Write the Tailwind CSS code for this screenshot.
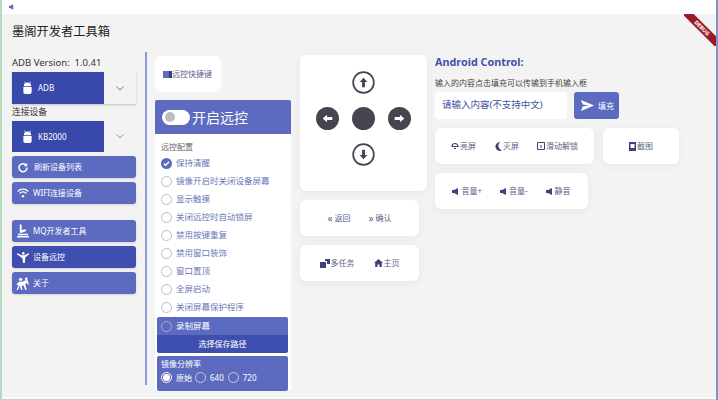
<!DOCTYPE html>
<html lang="zh-CN">
<head>
    <meta charset="UTF-8">
    <title>墨阁开发者工具箱</title>
    <script src="https://cdn.jsdelivr.net/npm/@tailwindcss/browser@4"></script>
</head>
<body class="w-[718px] h-[400px] overflow-hidden relative bg-[#f3f3f3] font-['Noto_Sans','Noto_Sans_CJK_SC',sans-serif] text-[#333]">
    <!-- window edges -->
    <div class="absolute left-0 top-0 bottom-0 w-[2px] bg-[#b5dcc0]"></div>
    <div class="absolute right-0 top-0 bottom-0 w-[2px] bg-[#7f93cf]"></div>
    <div class="absolute left-[2px] right-[2px] bottom-0 h-[3px] bg-[#fafafa] border-b border-[#cfcfcf]"></div>

    <!-- title bar -->
    <div class="h-[14px] bg-white flex items-center pl-[9px]">
        <svg class="w-[6px] h-[6px] text-[#5c6bc0]" viewBox="0 0 10 10" fill="currentColor"><path d="M0 3h3l4-3v10L3 7H0z"/></svg>
    </div>

    <!-- debug ribbon -->
    <div class="absolute top-[14px] right-[2px] w-[32px] h-[32px] overflow-hidden">
        <div class="absolute left-[-12px] top-[10px] w-[60px] h-[8px] bg-[#9b1c28] rotate-45 text-white text-[5.500px] leading-[8px] font-bold text-center">DEBUG</div>
    </div>

    <h1 class="pl-[12px] pt-[9px] h-[38px] text-[12.250px] leading-[18px] font-normal text-[#222]">墨阁开发者工具箱</h1>

    <div class="flex items-start pl-[12px]">
        <!-- left column -->
        <div class="w-[124px] shrink-0 pt-[1px]">
            <p class="text-[9.500px] leading-[19px] h-[19px] text-[#333]">ADB Version:&nbsp; 1.0.41</p>
            <div class="flex h-[32px] shadow-[0_1px_2px_rgba(0,0,0,0.2)] bg-[#f3f3f3]">
                <div class="w-[92px] bg-[#3949ab] flex items-center pl-[10px] gap-[5px] text-white text-[8px]">
                    <svg class="w-[11px] h-[14px]" viewBox="0 0 12 14" fill="currentColor"><path d="M2 5a4 4 0 0 1 8 0zM1.500 6h9v5.500a2 2 0 0 1-2 2h-5a2 2 0 0 1-2-2zM3 0l1 1.500-.6.3-1-1.500zM9 0l-1 1.500.6.3 1-1.500z"/></svg>
                    ADB
                </div>
                <div class="flex-1 flex items-center justify-center">
                    <svg class="w-[8px] h-[5px] text-[#777]" viewBox="0 0 8 5" fill="none" stroke="currentColor" stroke-width="1"><path d="M.5.500 4 4 7.500.5"/></svg>
                </div>
            </div>
            <p class="text-[8.750px] leading-[17px] h-[17px] text-[#333]">连接设备</p>
            <div class="flex h-[31px] bg-[#f3f3f3]">
                <div class="w-[92px] bg-[#3949ab] flex items-center pl-[10px] gap-[5px] text-white text-[8px]">
                    <svg class="w-[11px] h-[14px]" viewBox="0 0 12 14" fill="currentColor"><path d="M2 5a4 4 0 0 1 8 0zM1.500 6h9v5.500a2 2 0 0 1-2 2h-5a2 2 0 0 1-2-2zM3 0l1 1.500-.6.3-1-1.500zM9 0l-1 1.500.6.3 1-1.500z"/></svg>
                    KB2000
                </div>
                <div class="flex-1 flex items-center justify-center">
                    <svg class="w-[8px] h-[5px] text-[#999]" viewBox="0 0 8 5" fill="none" stroke="currentColor" stroke-width="1"><path d="M.5.500 4 4 7.500.5"/></svg>
                </div>
            </div>

            <div class="mt-[4px] flex flex-col gap-[4px]">
                <div class="h-[22px] rounded-[3px] bg-[#5c6bc0] flex items-center pl-[6px] gap-[6px] text-white text-[8px] shadow-sm">
                    <svg class="w-[10px] h-[11px]" viewBox="0 0 12 12" fill="none" stroke="currentColor" stroke-width="1.800"><path d="M10 3.500A4.800 4.800 0 1 0 10.800 6"/><path d="M11 .5v4H7" fill="currentColor" stroke="none"/></svg>
                    刷新设备列表
                </div>
                <div class="h-[22px] rounded-[3px] bg-[#5c6bc0] flex items-center pl-[5px] gap-[4px] text-white text-[8px] shadow-sm">
                    <svg class="w-[12px] h-[10px]" viewBox="0 0 13 11" fill="none" stroke="currentColor" stroke-width="1.400"><path d="M.7 3.800a8 8 0 0 1 11.600 0M2.800 6a5 5 0 0 1 7.400 0"/><circle cx="6.500" cy="9" r="1.300" fill="currentColor" stroke="none"/></svg>
                    WIFI连接设备
                </div>
            </div>

            <div class="mt-[16px] flex flex-col gap-[4px]">
                <div class="h-[22px] rounded-[3px] bg-[#5c6bc0] flex items-center pl-[5px] gap-[4px] text-white text-[8px] shadow-sm">
                    <svg class="w-[12px] h-[14px]" viewBox="0 0 13 14" fill="currentColor"><path d="M3 0h2v6l4-1 1 2-5 2H3zM1 10h11v1.500H1zM0 12.500h13V14H0z"/></svg>
                    MQ开发者工具
                </div>
                <div class="h-[22px] rounded-[3px] bg-[#3f4fb0] flex items-center pl-[5px] gap-[4px] text-white text-[8px] shadow-sm">
                    <svg class="w-[12px] h-[11px]" viewBox="0 0 13 12" fill="currentColor"><path d="M0 1l5 2.500h3L13 1v1.500L9 6 8.500 12H6.500L6 7 4 5.500 0 2.500z"/><circle cx="6.800" cy="1.500" r="1.400"/></svg>
                    设备远控
                </div>
                <div class="h-[22px] rounded-[3px] bg-[#5c6bc0] flex items-center pl-[4px] gap-[4px] text-white text-[8px] shadow-sm">
                    <svg class="w-[13px] h-[13px]" viewBox="0 0 14 14" fill="currentColor"><circle cx="5" cy="2.500" r="1.800"/><circle cx="11" cy="2" r="1.500"/><path d="M3 5h4l3-1.500h2.500L14 8h-1.500l-1-2L10 8l1.500 6H10L8 9l-2 1 1 4H5.500L4 9.500 2 14H.5L3 8 1.500 9 .5 8z"/></svg>
                    关于
                </div>
            </div>
        </div>

        <!-- divider -->
        <div class="ml-[9px] mr-[8px] w-[2px] h-[333px] bg-[#8c98d8] shrink-0"></div>

        <!-- remote config column -->
        <div class="w-[136px] shrink-0 pt-[4px]">
            <div class="w-[66px] h-[36px] bg-white rounded-[6px] flex items-center pl-[8px] text-[8px] text-[#5c5f8a]">
                <span class="w-[9px] h-[7px] bg-[#5c6bc0] border-r-[3px] border-[#3a3f70] shrink-0"></span>远控快捷键
            </div>
            <div class="mt-[8px] h-[34px] bg-[#5c6bc0] rounded-t-[2px] flex items-center pl-[7px] gap-[2px] text-white text-[14px]">
                <span class="w-[28px] h-[15px] rounded-full bg-white flex items-center pl-[3px]">
                    <span class="w-[10px] h-[10px] rounded-full bg-[#bdbdbd]"></span>
                </span>
                开启远控
            </div>
            <div class="bg-white h-[256px] pt-[6px] text-[8.500px] text-[#6a76b8]">
                <p class="pl-[6px] h-[14px] leading-[14px] text-[8px] text-[#666]">远控配置</p>
                <div class="pl-[6px] flex flex-col">
                    <label class="h-[18px] flex items-center gap-[4px]"><span class="w-[11px] h-[11px] rounded-full bg-[#5c6bc0] flex items-center justify-center"><svg class="w-[7px] h-[7px]" viewBox="0 0 8 8" fill="none" stroke="white" stroke-width="1.500"><path d="M1 4l2 2 4-4"/></svg></span>保持清醒</label>
                    <label class="h-[18px] flex items-center gap-[4px]"><span class="w-[11px] h-[11px] rounded-full border border-[#bbb]"></span>镜像开启时关闭设备屏幕</label>
                    <label class="h-[18px] flex items-center gap-[4px]"><span class="w-[11px] h-[11px] rounded-full border border-[#bbb]"></span>显示触摸</label>
                    <label class="h-[18px] flex items-center gap-[4px]"><span class="w-[11px] h-[11px] rounded-full border border-[#bbb]"></span>关闭远控时自动锁屏</label>
                    <label class="h-[18px] flex items-center gap-[4px]"><span class="w-[11px] h-[11px] rounded-full border border-[#bbb]"></span>禁用按键重复</label>
                    <label class="h-[18px] flex items-center gap-[4px]"><span class="w-[11px] h-[11px] rounded-full border border-[#bbb]"></span>禁用窗口装饰</label>
                    <label class="h-[18px] flex items-center gap-[4px]"><span class="w-[11px] h-[11px] rounded-full border border-[#bbb]"></span>窗口置顶</label>
                    <label class="h-[18px] flex items-center gap-[4px]"><span class="w-[11px] h-[11px] rounded-full border border-[#bbb]"></span>全屏启动</label>
                    <label class="h-[18px] flex items-center gap-[4px]"><span class="w-[11px] h-[11px] rounded-full border border-[#bbb]"></span>关闭屏幕保护程序</label>
                </div>
                <div class="mx-[2px] mt-[1px] w-[131px] rounded-[2px] overflow-hidden text-white">
                    <div class="h-[18px] bg-[#5c6bc0] flex items-center pl-[4px] gap-[4px]"><span class="w-[11px] h-[11px] rounded-full border border-[#aab]"></span>录制屏幕</div>
                    <div class="h-[18px] bg-[#3f4fb0] flex items-center justify-center text-[8px]">选择保存路径</div>
                </div>
                <div class="mx-[2px] mt-[3px] w-[131px] h-[35px] rounded-[2px] bg-[#5c6bc0] text-white pl-[4px] pt-[2px]">
                    <p class="text-[8px] leading-[12px]">镜像分辨率</p>
                    <div class="flex items-center gap-[4px] h-[15px] text-[8px]">
                        <span class="w-[11px] h-[11px] rounded-full border border-white flex items-center justify-center"><span class="w-[7px] h-[7px] rounded-full bg-white"></span></span>原始
                        <span class="w-[11px] h-[11px] rounded-full border border-[#ccd] ml-[-1px]"></span>640
                        <span class="w-[11px] h-[11px] rounded-full border border-[#ccd]"></span>720
                    </div>
                </div>
            </div>
        </div>

        <!-- direction pad column -->
        <div class="w-[127px] ml-[9px] shrink-0 pt-[3px]">
            <div class="h-[136px] bg-white rounded-[6px] shadow-[0_2px_8px_rgba(0,0,0,0.05)] grid grid-cols-3 grid-rows-3 justify-items-center items-center px-[9px] pt-[9px] pb-[18px]">
                <span></span>
                <svg class="w-[23px] h-[23px]" viewBox="0 0 24 24"><circle cx="12" cy="12" r="10.800" fill="white" stroke="#45454f" stroke-width="1.800"/><path d="M12 7l4 4.500h-2.500V17h-3v-5.500H8z" fill="#45454f"/></svg>
                <span></span>
                <svg class="w-[23px] h-[23px]" viewBox="0 0 24 24"><circle cx="12" cy="12" r="12" fill="#45454f"/><path d="M7 12l4.500-4v2.500H17v3h-5.500V16z" fill="white"/></svg>
                <span class="w-[23px] h-[23px] rounded-full bg-[#45454f]"></span>
                <svg class="w-[23px] h-[23px]" viewBox="0 0 24 24"><circle cx="12" cy="12" r="12" fill="#45454f"/><path d="M17 12l-4.500-4v2.500H7v3h5.500V16z" fill="white"/></svg>
                <span></span>
                <svg class="w-[23px] h-[23px]" viewBox="0 0 24 24"><circle cx="12" cy="12" r="10.800" fill="white" stroke="#45454f" stroke-width="1.800"/><path d="M12 17l4-4.500h-2.500V7h-3v5.500H8z" fill="#45454f"/></svg>
                <span></span>
            </div>
            <div class="mt-[9px] w-[119px] h-[36px] bg-white rounded-[6px] shadow-[0_2px_8px_rgba(0,0,0,0.05)] flex items-center justify-center gap-[18px] text-[8px] text-[#5c5f8a]">
                <span class="flex items-center gap-[2px]"><span class="text-[10px] leading-none">«</span>返回</span>
                <span class="flex items-center gap-[2px]"><span class="text-[10px] leading-none">»</span>确认</span>
            </div>
            <div class="mt-[9px] w-[119px] h-[36px] bg-white rounded-[6px] shadow-[0_2px_8px_rgba(0,0,0,0.05)] flex items-center justify-center gap-[19px] text-[8px] text-[#5c5f8a]">
                <span class="flex items-center gap-[1px]"><svg class="w-[10px] h-[9px] text-[#3f4378]" viewBox="0 0 10 9" fill="currentColor"><path d="M0 3h6v6H0zM5 0h5v5H7V2H5z"/></svg>多任务</span>
                <span class="flex items-center gap-[1px]"><svg class="w-[9px] h-[8px] text-[#3f4378]" viewBox="0 0 9 8" fill="currentColor"><path d="M4.500 0L9 4H7.800v4H5.500V5.500h-2V8H1.200V4H0z"/></svg>主页</span>
            </div>
        </div>

        <!-- android control column -->
        <div class="ml-[8px] flex-1 pt-[1px]">
            <h2 class="text-[10.800px] leading-[18px] font-bold text-[#4152a8]">Android Control:</h2>
            <p class="mt-[6px] text-[8px] leading-[12px] text-[#444]">输入的内容点击填充可以传输到手机输入框</p>
            <div class="mt-[3px] flex gap-[7px]">
                <div class="w-[132px] h-[27px] bg-white rounded-[4px] flex items-center pl-[7px] text-[9.500px] text-[#3f4fa0]">请输入内容(不支持中文)</div>
                <div class="w-[45px] h-[27px] bg-[#5c6bc0] rounded-[3px] flex items-center pl-[7px] gap-[4px] text-white text-[8px]">
                    <svg class="w-[13px] h-[11px]" viewBox="0 0 12 10" fill="currentColor"><path d="M0 0l12 5-12 5 1.500-4L7 5 1.500 4z"/></svg>
                    填充
                </div>
            </div>
            <div class="mt-[9px] flex gap-[9px]">
                <div class="w-[159px] h-[36px] bg-white rounded-[6px] shadow-[0_2px_8px_rgba(0,0,0,0.05)] flex items-center justify-center gap-[18px] text-[8px] text-[#5c5f8a]">
                    <span class="flex items-center gap-[1px]"><svg class="w-[8px] h-[8px] text-[#3f4378]" viewBox="0 0 8 8" fill="none" stroke="currentColor" stroke-width="1.200"><path d="M1 4.500a3 3 0 1 1 6 0zM3 6.500h2"/></svg>亮屏</span>
                    <span class="flex items-center gap-[1px]"><svg class="w-[8px] h-[9px] text-[#3f4378]" viewBox="0 0 8 9" fill="currentColor"><path d="M6 0a4.500 4.500 0 1 0 2 8.500A5 5 0 0 1 6 0z"/></svg>灭屏</span>
                    <span class="flex items-center gap-[1px]"><svg class="w-[8px] h-[8px] text-[#3f4378]" viewBox="0 0 8 8" fill="none" stroke="currentColor"><path d="M.5.500h7v7h-7zM4 3v3"/></svg>滑动解锁</span>
                </div>
                <div class="w-[76px] h-[36px] bg-white rounded-[6px] shadow-[0_2px_8px_rgba(0,0,0,0.05)] flex items-center justify-center gap-[1px] text-[8px] text-[#5c5f8a]">
                    <svg class="w-[7px] h-[9px] text-[#3f4378]" viewBox="0 0 7 9" fill="currentColor"><path d="M0 0h7v9H0zM1.500 2v4h4V2z"/></svg>截图
                </div>
            </div>
            <div class="mt-[9px] w-[153px] h-[36px] bg-white rounded-[6px] shadow-[0_2px_8px_rgba(0,0,0,0.05)] flex items-center justify-center gap-[18px] text-[8px] text-[#5c5f8a]">
                <span class="flex items-center gap-[1px]"><svg class="w-[8px] h-[7px] text-[#3f4378]" viewBox="0 0 8 7" fill="currentColor"><path d="M0 2h2l4-2v7L2 5H0z"/></svg>音量+</span>
                <span class="flex items-center gap-[1px]"><svg class="w-[8px] h-[7px] text-[#3f4378]" viewBox="0 0 8 7" fill="currentColor"><path d="M0 2h2l4-2v7L2 5H0z"/></svg>音量-</span>
                <span class="flex items-center gap-[1px]"><svg class="w-[8px] h-[7px] text-[#3f4378]" viewBox="0 0 8 7" fill="currentColor"><path d="M0 2h2l4-2v7L2 5H0z"/></svg>静音</span>
            </div>
        </div>
    </div>
</body>
</html>
